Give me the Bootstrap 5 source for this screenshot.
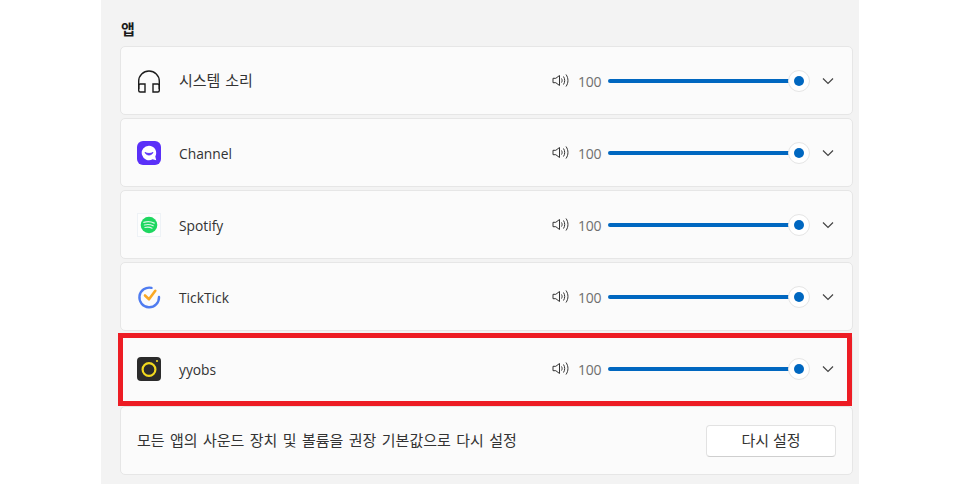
<!DOCTYPE html>
<html lang="ko">
<head>
  <meta charset="UTF-8">
  <title>앱 볼륨</title>
  <link href="https://cdn.jsdelivr.net/npm/bootstrap@5.3.0/dist/css/bootstrap.min.css" rel="stylesheet">
  <style>
    html, body { height: 484px; overflow: hidden; background: #fff; }
    body { font-family: "Open Sans", "Noto Sans CJK KR", sans-serif; color: #1b1b1b; }
    .panel { width: 758px; height: 484px; margin-left: 101px; padding: 19px 6px 0 19px; background: #f3f3f3; position: relative; }
    .panel-title { font-size: 15px; font-weight: 700; line-height: 20px; margin: 0 0 7px 1px; }
    .app-list { gap: 3px; }
    .app-row { height: 69px; padding: 0 16px; background: #fbfbfb; border: 1px solid #e6e6e6; border-radius: 5px; }
    .app-ico { width: 24px; height: 24px; flex: none; display: block; }
    .app-name { font-size: 13.8px; margin-left: 18px; margin-top: 4px; color: #333; }
    .app-name-ko { font-size: 15px; margin-top: 0; word-spacing: 1px; }
    .vol-ico { width: 17px; height: 15px; flex: none; display: block; }
    .vol-num { font-size: 14px; color: #6f6f6f; width: 24px; margin-left: 9px; margin-top: 2px; letter-spacing: -.2px; }
    .slider-track { width: 191px; height: 4px; margin-left: 6px; background: #0067c0; border-radius: 2px; position: relative; }
    .slider-knob { position: absolute; right: -11px; top: -9px; width: 22px; height: 22px; border-radius: 50%; background: #fff; border: 1px solid #e5e5e5; }
    .slider-knob::after { content: ""; position: absolute; left: 5px; top: 5px; width: 10px; height: 10px; border-radius: 50%; background: #0067c0; }
    .chev { width: 12px; height: 8px; margin-left: 23px; margin-right: 2px; flex: none; display: block; }
    .reset-text { font-size: 15px; color: #333; word-spacing: 1.500px; }
    .reset-btn { width: 130px; height: 32px; padding: 0; font-size: 15px; color: #333; background: #fff; border: 1px solid #e2e2e2; border-bottom-color: #cfcfcf; border-radius: 4px; }
    .reset-btn:hover { background: #fff; color: #333; border-color: #e2e2e2; }
    .red-mark { position: absolute; left: 17px; top: 333px; width: 734px; height: 73px; border: 5px solid #ed1c24; pointer-events: none; }
  </style>
</head>
<body>
  <div class="panel">
    <h2 class="panel-title">앱</h2>
    <div class="app-list d-flex flex-column">

      <!-- 시스템 소리 -->
      <div class="app-row d-flex align-items-center">
        <svg class="app-ico" viewBox="0 0 24 24" fill="none" stroke="#1b1b1b" stroke-width="1.400">
          <path d="M1.700 20V12a10.300 10 0 0 1 20.600 0v8"/>
          <path d="M1.700 16.500a1.500 1.500 0 0 1 1.500-1.500H8v8H3.200a1.500 1.500 0 0 1-1.500-1.500z"/>
          <path d="M22.300 16.500a1.500 1.500 0 0 0-1.500-1.500H16v8h4.800a1.500 1.500 0 0 0 1.500-1.500z"/>
        </svg>
        <span class="app-name app-name-ko">시스템 소리</span>
        <div class="d-flex align-items-center ms-auto">
          <svg class="vol-ico" viewBox="0 0 17 15" fill="none" stroke="#333" stroke-width="1"><path d="M1 5.300h2.800L7.500 2.500v10L3.800 9.700H1z"/><path d="M9.500 5.500c.8 1.300.8 2.700 0 4M11.500 3.500c1.600 2.500 1.600 5.500 0 8M14 1.500c2.600 3.700 2.600 8.300 0 12"/></svg>
          <span class="vol-num">100</span>
          <div class="slider-track"><div class="slider-knob"></div></div>
          <svg class="chev" viewBox="0 0 12 8" fill="none" stroke="#444" stroke-width="1.200"><path d="M1 1.500l5 5 5-5"/></svg>
        </div>
      </div>

      <!-- Channel -->
      <div class="app-row d-flex align-items-center">
        <svg class="app-ico" viewBox="0 0 24 24">
          <rect width="24" height="24" rx="6" fill="#5a30f8"/>
          <path d="M12 4.800a7.200 7.200 0 1 0 3.600 13.400l3.600 1-.9-3.700A7.200 7.200 0 0 0 12 4.800z" fill="#fff"/>
          <path d="M8 11.500c1.800 3.300 6.200 3.300 8 0-2.300 1.300-5.700 1.300-8 0z" fill="#5a30f8" stroke="#5a30f8" stroke-width=".9" stroke-linejoin="round"/>
        </svg>
        <span class="app-name">Channel</span>
        <div class="d-flex align-items-center ms-auto">
          <svg class="vol-ico" viewBox="0 0 17 15" fill="none" stroke="#333" stroke-width="1"><path d="M1 5.300h2.800L7.500 2.500v10L3.800 9.700H1z"/><path d="M9.500 5.500c.8 1.300.8 2.700 0 4M11.500 3.500c1.600 2.500 1.600 5.500 0 8M14 1.500c2.600 3.700 2.600 8.300 0 12"/></svg>
          <span class="vol-num">100</span>
          <div class="slider-track"><div class="slider-knob"></div></div>
          <svg class="chev" viewBox="0 0 12 8" fill="none" stroke="#444" stroke-width="1.200"><path d="M1 1.500l5 5 5-5"/></svg>
        </div>
      </div>

      <!-- Spotify -->
      <div class="app-row d-flex align-items-center">
        <svg class="app-ico" viewBox="0 0 24 24" fill="none">
          <rect x=".5" y=".5" width="23" height="23" fill="#fdfdfd" stroke="#eef2f6"/>
          <circle cx="12" cy="12" r="8.300" fill="#1ed760"/>
          <path d="M6.800 9.300c3.500-1 7.500-.7 10.400.8M7.400 12c3-.8 6.300-.5 8.800.8M8 14.500c2.500-.6 5-.4 7 .7" stroke="#d9f7e3" stroke-width="1.200" stroke-linecap="round"/>
        </svg>
        <span class="app-name">Spotify</span>
        <div class="d-flex align-items-center ms-auto">
          <svg class="vol-ico" viewBox="0 0 17 15" fill="none" stroke="#333" stroke-width="1"><path d="M1 5.300h2.800L7.500 2.500v10L3.800 9.700H1z"/><path d="M9.500 5.500c.8 1.300.8 2.700 0 4M11.500 3.500c1.600 2.500 1.600 5.500 0 8M14 1.500c2.600 3.700 2.600 8.300 0 12"/></svg>
          <span class="vol-num">100</span>
          <div class="slider-track"><div class="slider-knob"></div></div>
          <svg class="chev" viewBox="0 0 12 8" fill="none" stroke="#444" stroke-width="1.200"><path d="M1 1.500l5 5 5-5"/></svg>
        </div>
      </div>

      <!-- TickTick -->
      <div class="app-row d-flex align-items-center">
        <svg class="app-ico" viewBox="0 0 24 24" fill="none">
          <path d="M14.500 2.900A9.800 9.800 0 1 0 22 12" stroke="#4f7cf0" stroke-width="2.400" stroke-linecap="round"/>
          <path d="M8 10.500l4 3.800L18.300 5.800" stroke="#f9a825" stroke-width="2.600" stroke-linecap="round" stroke-linejoin="round"/>
        </svg>
        <span class="app-name">TickTick</span>
        <div class="d-flex align-items-center ms-auto">
          <svg class="vol-ico" viewBox="0 0 17 15" fill="none" stroke="#333" stroke-width="1"><path d="M1 5.300h2.800L7.500 2.500v10L3.800 9.700H1z"/><path d="M9.500 5.500c.8 1.300.8 2.700 0 4M11.500 3.500c1.600 2.500 1.600 5.500 0 8M14 1.500c2.600 3.700 2.600 8.300 0 12"/></svg>
          <span class="vol-num">100</span>
          <div class="slider-track"><div class="slider-knob"></div></div>
          <svg class="chev" viewBox="0 0 12 8" fill="none" stroke="#444" stroke-width="1.200"><path d="M1 1.500l5 5 5-5"/></svg>
        </div>
      </div>

      <!-- yyobs -->
      <div class="app-row d-flex align-items-center">
        <svg class="app-ico" viewBox="0 0 24 24" fill="none">
          <rect width="24" height="24" rx="4" fill="#2b2b2b"/>
          <circle cx="12" cy="12.500" r="6.400" stroke="#f2d91f" stroke-width="2.200"/>
          <circle cx="20" cy="4" r="1.100" fill="#f2d91f"/>
        </svg>
        <span class="app-name">yyobs</span>
        <div class="d-flex align-items-center ms-auto">
          <svg class="vol-ico" viewBox="0 0 17 15" fill="none" stroke="#333" stroke-width="1"><path d="M1 5.300h2.800L7.500 2.500v10L3.800 9.700H1z"/><path d="M9.500 5.500c.8 1.300.8 2.700 0 4M11.500 3.500c1.600 2.500 1.600 5.500 0 8M14 1.500c2.600 3.700 2.600 8.300 0 12"/></svg>
          <span class="vol-num">100</span>
          <div class="slider-track"><div class="slider-knob"></div></div>
          <svg class="chev" viewBox="0 0 12 8" fill="none" stroke="#444" stroke-width="1.200"><path d="M1 1.500l5 5 5-5"/></svg>
        </div>
      </div>

      <!-- reset -->
      <div class="app-row d-flex align-items-center justify-content-between">
        <span class="reset-text">모든 앱의 사운드 장치 및 볼륨을 권장 기본값으로 다시 설정</span>
        <button type="button" class="btn reset-btn">다시 설정</button>
      </div>
    </div>

    <div class="red-mark"></div>
  </div>

  <script src="https://cdn.jsdelivr.net/npm/bootstrap@5.3.0/dist/js/bootstrap.bundle.min.js"></script>
</body>
</html>
